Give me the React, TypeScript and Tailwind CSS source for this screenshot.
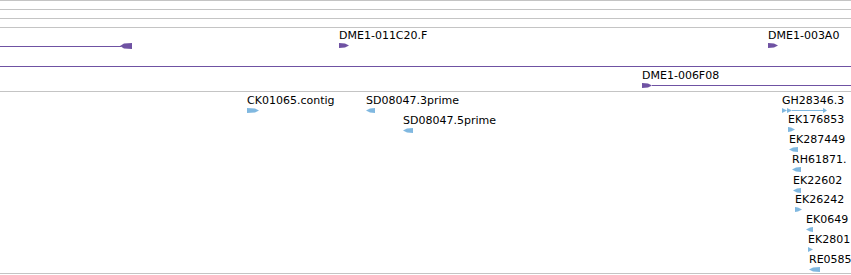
import React from 'react';

type Dir = 'left' | 'right';

interface Feature {
  x: number;
  top: number;
  label?: string;
  w: number;
  dir: Dir;
  lineTo?: number;
}

const PURPLE = '#6f52a3';
const BLUE = '#80b8e0';

const purpleFeatures: Feature[] = [
  { x: 339, top: 1, label: 'DME1-011C20.F', w: 10, dir: 'right' },
  { x: 768, top: 1, label: 'DME1-003A0', w: 10, dir: 'right' },
  { x: 642, top: 41, label: 'DME1-006F08', w: 10, dir: 'right', lineTo: 851 },
];

const blueFeatures: Feature[] = [
  { x: 247, top: 2, label: 'CK01065.contig', w: 12, dir: 'right' },
  { x: 366, top: 2, label: 'SD08047.3prime', w: 9, dir: 'left' },
  { x: 403, top: 22, label: 'SD08047.5prime', w: 10, dir: 'left' },
  { x: 788, top: 21, label: 'EK176853', w: 7, dir: 'right' },
  { x: 789, top: 41, label: 'EK287449', w: 9, dir: 'left' },
  { x: 792, top: 61, label: 'RH61871.', w: 9, dir: 'left' },
  { x: 793, top: 82, label: 'EK22602', w: 8, dir: 'left' },
  { x: 795, top: 101, label: 'EK26242', w: 7, dir: 'right' },
  { x: 806, top: 121, label: 'EK0649', w: 7, dir: 'left' },
  { x: 808, top: 141, label: 'EK2801', w: 5, dir: 'right' },
  { x: 809, top: 161, label: 'RE0585', w: 11, dir: 'left' },
];

const Arrow: React.FC<{ w: number; dir: Dir; color: string }> = ({ w, dir, color }) => {
  const tip = Math.min(4, w - 1);
  const pts =
    dir === 'right'
      ? `0,0 ${w - tip},0.5 ${w},2.5 ${w - tip},4.5 0,5`
      : `${w},0 ${tip},0.5 0,2.5 ${tip},4.5 ${w},5`;
  return (
    <svg width={w} height={5} viewBox={`0 0 ${w} 5`} className="block">
      <polygon points={pts} fill={color} />
    </svg>
  );
};

// one feature on the track canvas: label with strand glyph underneath
const FeatureGlyph: React.FC<{ f: Feature; color: string }> = ({ f, color }) => (
  <div className="absolute" style={{ left: f.x, top: f.top }}>
    {f.label && (
      <div className="text-[11px] leading-[13px] text-black whitespace-nowrap">{f.label}</div>
    )}
    <div className="mt-px flex items-center h-[5px]">
      <Arrow w={f.w} dir={f.dir} color={color} />
      {f.lineTo && (
        <div className="h-px" style={{ width: f.lineTo - f.x - f.w, background: color }} />
      )}
    </div>
  </div>
);

const Rule = () => <div className="h-px bg-[#c4c4c4]" />;

export default function App() {
  return (
    <div
      className="w-[851px] h-[275px] overflow-hidden bg-white flex flex-col"
      style={{ fontFamily: '"DejaVu Sans", Verdana, sans-serif' }}
    >
      <Rule />
      <div className="h-[8px]" />
      <Rule />
      <div className="h-[8px]" />
      <Rule />
      <div className="h-[8px]" />
      <Rule />

      {/* purple track */}
      <div className="relative h-[63px]">
        <div className="absolute left-0 top-[15px] flex items-center h-[6px]">
          <div className="h-px w-[121px] bg-[#6f52a3]" />
          <svg width={12} height={6} viewBox="0 0 12 6" className="block -ml-px">
            <polygon points="0,3 4,0.5 12,0 12,6 4,5.5" fill={PURPLE} />
          </svg>
        </div>
        <div className="absolute left-0 right-0 top-[38px] h-px bg-[#6f52a3]" />
        {purpleFeatures.map((f, i) => (
          <FeatureGlyph key={i} f={f} color={PURPLE} />
        ))}
      </div>
      <Rule />

      {/* blue track */}
      <div className="relative h-[181px]">
        {blueFeatures.map((f, i) => (
          <FeatureGlyph key={i} f={f} color={BLUE} />
        ))}
        <div className="absolute left-[782px] top-[2px]">
          <div className="text-[11px] leading-[13px] text-black whitespace-nowrap">GH28346.3</div>
          <div className="mt-px flex items-center h-[5px]">
            <Arrow w={5} dir="right" color={BLUE} />
            <Arrow w={5} dir="right" color={BLUE} />
            <div className="h-px w-[31px] bg-[#80b8e0]" />
            <Arrow w={4} dir="right" color={BLUE} />
          </div>
        </div>
      </div>
      <Rule />
    </div>
  );
}
